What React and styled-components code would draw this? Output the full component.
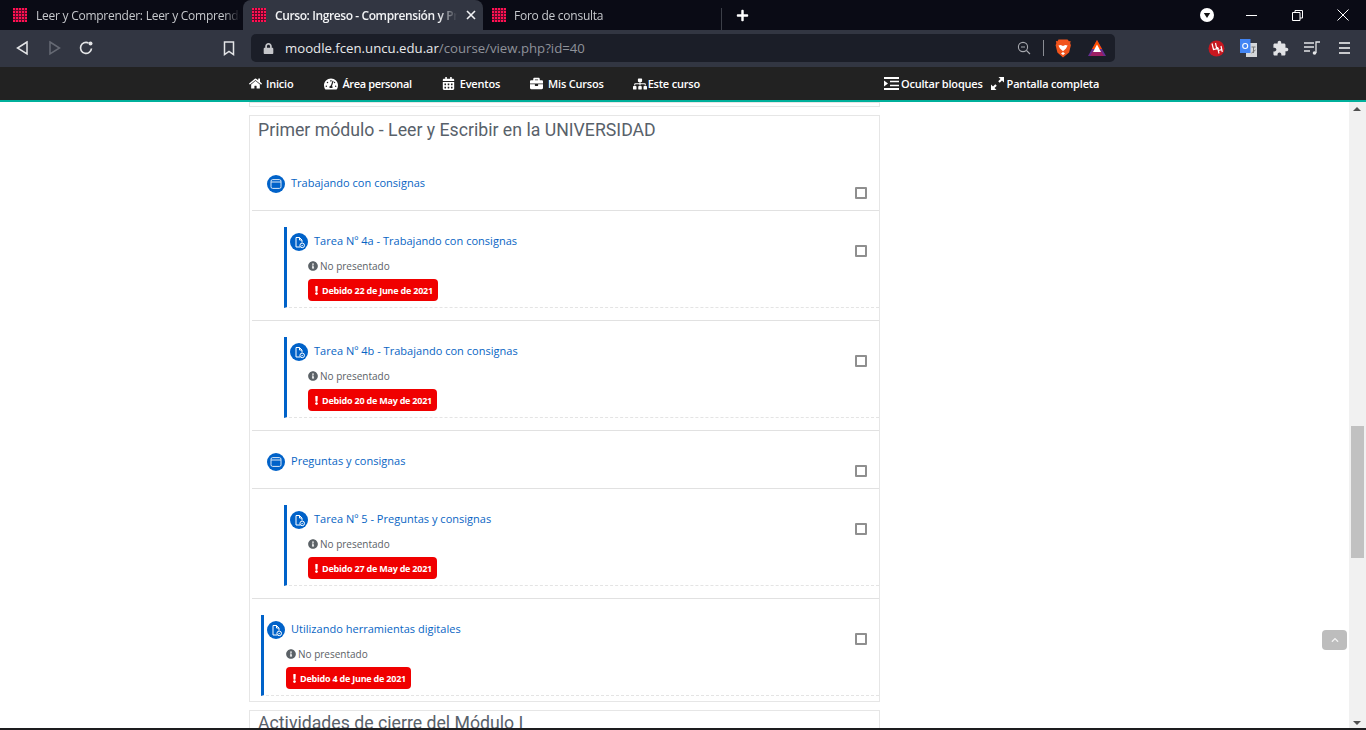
import React from 'react';
import styled, { createGlobalStyle } from 'styled-components';
import {
  FaHome, FaTachometerAlt, FaCalendarAlt, FaBriefcase, FaSitemap,
  FaInfoCircle, FaExclamation, FaChevronUp, FaPlus, FaLock,
} from 'react-icons/fa';

const GlobalStyle = createGlobalStyle`
  html, body { margin: 0; padding: 0; height: 100%; overflow: hidden; background: #fff; }
  * { box-sizing: border-box; }
  body { font-family: "Open Sans", "Liberation Sans", sans-serif; }
`;

const Screen = styled.div`
  width: 1366px;
  height: 730px;
  display: flex;
  flex-direction: column;
  overflow: hidden;
  position: relative;
`;

/* browser chrome */
const TabStrip = styled.div`
  height: 30px;
  flex: none;
  background: #0a0b15;
  display: flex;
  align-items: stretch;
`;

const Tab = styled.div`
  width: ${({ $w }) => $w}px;
  flex: none;
  display: flex;
  align-items: center;
  gap: ${({ $gap }) => $gap}px;
  padding-left: ${({ $pad }) => $pad}px;
  background: ${({ $active }) => ($active ? '#323642' : 'transparent')};
  border-radius: ${({ $active }) => ($active ? '8px 8px 0 0' : '0')};
  color: ${({ $active }) => ($active ? '#f1f2f4' : '#c6c8cc')};
  font-size: 12px;
  font-weight: ${({ $active }) => ($active ? 600 : 400)};
  letter-spacing: ${({ $active }) => ($active ? -0.4 : -0.25)}px;
  white-space: nowrap;
  overflow: hidden;
`;

const TabTitle = styled.span`
  width: ${({ $w }) => $w}px;
  overflow: hidden;
  white-space: nowrap;
  -webkit-mask-image: linear-gradient(to right, #000 ${({ $fade }) => $fade}%, transparent 100%);
  mask-image: linear-gradient(to right, #000 ${({ $fade }) => $fade}%, transparent 100%);
`;

const TabClose = styled.span`
  display: flex;
`;

const TabDivider = styled.div`
  width: 1px;
  height: 22px;
  margin-top: 8px;
  background: #3c3f48;
  flex: none;
`;

const NewTab = styled.div`
  width: 40px;
  flex: none;
  display: flex;
  align-items: center;
  justify-content: center;
  color: #fff;
  font-size: 13px;
`;

const StripEnd = styled.div`
  margin-left: auto;
  display: flex;
  align-items: center;
`;

const WindowButton = styled.div`
  width: 46px;
  height: 30px;
  padding-left: ${({ $shift }) => $shift || 0}px;
  display: flex;
  align-items: center;
  justify-content: center;
`;

const Toolbar = styled.div`
  height: 37px;
  flex: none;
  background: #323642;
  display: flex;
  align-items: center;
  padding: 0 0 1px 14px;
`;

const ToolSlot = styled.div`
  width: ${({ $w }) => $w}px;
  flex: none;
  display: flex;
  align-items: center;
  justify-content: ${({ $left }) => ($left ? 'flex-start' : 'center')};
`;

const Omnibox = styled.div`
  width: 864px;
  height: 28px;
  flex: none;
  background: #1b1e28;
  border-radius: 5px;
  display: flex;
  align-items: center;
  padding-left: 12px;
  font-size: 13.2px;
`;

const Host = styled.span`
  color: #e8e9eb;
  margin-left: 11px;
`;

const UrlPath = styled.span`
  color: #8f929a;
`;

const OmniEnd = styled.div`
  margin-left: auto;
  display: flex;
  align-items: center;
  padding-right: 9px;
`;

const OmniSep = styled.div`
  width: 1px;
  height: 16px;
  background: #8a8d94;
  margin: 0 11px 0 12px;
`;

const Extensions = styled.div`
  display: flex;
  align-items: center;
  margin-left: 85px;
`;

/* moodle page */
const NavBar = styled.nav`
  height: 35px;
  flex: none;
  background: #222;
  border-bottom: 2px solid #00b09b;
  display: flex;
  align-items: center;
  padding-left: 249px;
`;

const NavItem = styled.a`
  display: flex;
  align-items: center;
  gap: ${({ $gap }) => ($gap === undefined ? 4 : $gap)}px;
  margin-right: ${({ $mr }) => $mr}px;
  color: #fff;
  font-size: 11px;
  font-weight: 600;
  letter-spacing: ${({ $ls }) => ($ls === undefined ? -0.2 : $ls)}px;
  white-space: nowrap;
  svg { font-size: ${({ $icon }) => $icon || 13}px; flex: none; }
`;

const Viewport = styled.div`
  flex: 1;
  min-height: 0;
  display: flex;
  overflow: hidden;
`;

const Main = styled.main`
  flex: 1;
  min-width: 0;
  padding-left: 249px;
  position: relative;
  overflow: hidden;
`;

const Section = styled.section`
  width: 631px;
  border: 1px solid #e6e6e6;
  margin-bottom: 8px;
  height: ${({ $h }) => ($h ? `${$h}px` : 'auto')};
`;

const SectionName = styled.h3`
  margin: 0;
  height: 37px;
  padding: 4px 0 0 8px;
  font-family: Roboto, "Liberation Sans", sans-serif;
  font-size: 17.7px;
  line-height: 21px;
  font-weight: 400;
  color: #58616a;
`;

const Row = styled.div`
  display: flex;
  justify-content: space-between;
  align-items: flex-start;
  margin-left: 2px;
  padding-right: 12px;
  padding-top: ${({ $plain }) => ($plain ? 0 : 16)}px;
  height: ${({ $h }) => $h}px;
  border-bottom: ${({ $last }) => ($last ? 'none' : '1px solid #e1e1e1')};
`;

const Activity = styled.div`
  flex: 1;
  min-width: 0;
  margin-left: ${({ $indent }) => $indent}px;
  margin-right: ${({ $plain }) => ($plain ? 0 : -24)}px;
`;

const LabelLine = styled.div`
  display: flex;
  align-items: center;
  gap: 6px;
  height: 18px;
  margin-top: 22px;
`;

const Assignment = styled.div`
  height: 81px;
  border-left: 3px solid #0062c9;
  border-bottom: 1px dashed #e4e4e4;
  padding: 6px 0 0 3px;
`;

const TitleLine = styled.div`
  display: flex;
  align-items: center;
  gap: 6px;
  height: 18px;
`;

const IconDisc = styled.span`
  width: 18px;
  height: 18px;
  border-radius: 50%;
  background: #0062c9;
  flex: none;
  display: flex;
  align-items: center;
  justify-content: center;
`;

const ActivityLink = styled.a`
  color: #0865c4;
  font-size: 11px;
  letter-spacing: 0.02px;
  line-height: 16px;
  position: relative;
  top: -1px;
`;

const Status = styled.div`
  display: flex;
  align-items: center;
  gap: 2px;
  height: 14px;
  margin: 8px 0 0 ${({ $left }) => $left}px;
  color: #5b6166;
  font-size: 10px;
  font-weight: 500;
  svg { font-size: 10px; }
`;

const DueBadge = styled.div`
  display: inline-flex;
  align-items: center;
  gap: 1px;
  height: 22px;
  margin: 6px 0 0 ${({ $left }) => $left}px;
  padding: 0 5px 0 4px;
  background: #f00000;
  border-radius: 4px;
  color: #fff;
  font-size: 9px;
  font-weight: 700;
  letter-spacing: -0.22px;
  white-space: nowrap;
  svg { font-size: 9px; }
`;

const Check = styled.span`
  width: 12px;
  height: 12px;
  flex: none;
  border: 2px solid #8f8f8f;
  border-radius: 1px;
  margin-top: ${({ $top }) => $top}px;
`;

const CutOffName = styled(SectionName)`
  padding-top: 2px;
`;

const TopButton = styled.a`
  position: absolute;
  right: 2px;
  bottom: 80px;
  width: 25px;
  height: 20px;
  background: #bdbdbd;
  border-radius: 4px;
  color: #f4f4f4;
  display: flex;
  align-items: center;
  justify-content: center;
  font-size: 8px;
`;

const ScrollBar = styled.div`
  width: 17px;
  flex: none;
  background: #f1f1f1;
  position: relative;
`;

const ScrollThumb = styled.div`
  position: absolute;
  top: ${({ $top }) => $top}px;
  left: 2px;
  width: 13px;
  height: 132px;
  background: #c1c1c1;
`;

const ScrollArrow = styled.div`
  position: absolute;
  left: 4px;
  ${({ $up }) => ($up ? 'top: 5px;' : 'bottom: 5px;')}
  width: 0;
  height: 0;
  border-left: 4px solid transparent;
  border-right: 4px solid transparent;
  ${({ $up }) => ($up ? 'border-bottom: 4px solid #505050;' : 'border-top: 4px solid #505050;')}
`;

const Taskbar = styled.div`
  position: absolute;
  left: 0;
  right: 0;
  bottom: 0;
  height: 2px;
  background: #1d1d1f;
`;

/* small drawings */
const Favicon = () => (
  <svg width="14" height="14" viewBox="0 0 14 14">
    <rect width="14" height="14" fill="#5e0a2b" />
    {[0, 3, 6, 9, 12].map((y) =>
      [0, 3, 6, 9, 12].map((x) => (
        <rect key={`${x}-${y}`} x={x} y={y} width="2" height="2" fill="#ff1152" />
      ))
    )}
  </svg>
);

const WindowGlyph = () => (
  <svg width="12" height="12" viewBox="0 0 12 12" fill="none" stroke="#dbe8f7" strokeWidth="1">
    <rect x="1" y="1.600" width="10" height="8.800" rx="1.600" />
    <path d="M1 4h10" />
  </svg>
);

const TaskGlyph = () => (
  <svg width="13" height="13" viewBox="0 0 13 13" fill="none" stroke="#fff" strokeWidth="1">
    <path d="M7 11H3V1.500h3.500L9 4v2.500M6.500 1.500V4H9" />
    <circle cx="9.200" cy="9.400" r="2.300" />
    <path d="M8.300 9.500l.7.7 1.200-1.400" strokeWidth=".8" />
  </svg>
);

const HideBlocksGlyph = () => (
  <svg width="15" height="13" viewBox="0 0 15 13" fill="#fff">
    <path d="M0 0h15v2H0zM0 11h15v2H0zM6 3.700h9v1.600H6zM6 7.700h9v1.600H6zM0 3.500l4 3-4 3z" />
  </svg>
);

const ExpandGlyph = () => (
  <svg width="13" height="13" viewBox="0 0 13 13" fill="#fff">
    <path d="M7.500 0H13v5.500l-2-2-2.300 2.300-1.500-1.500L9.500 2zM5.500 13H0V7.500l2 2 2.300-2.300 1.500 1.500L3.500 11z" />
  </svg>
);

const Stroke = ({ w = 16, h = 16, children, color = '#e4e5e7', sw = 1.500 }) => (
  <svg width={w} height={h} viewBox={`0 0 ${w} ${h}`} fill="none" stroke={color} strokeWidth={sw}>
    {children}
  </svg>
);

const Brave = () => (
  <svg width="16" height="19" viewBox="0 0 16 19">
    <path d="M3.500 0.500h9l1.500 1.700 1.600-.2-.4 2.200.7 2-1.800 7.300L8 18.500l-5.600-5L.6 6.200l.7-2-.4-2.200 1.600.2z" fill="#f1541c" />
    <path d="M8 12.200 5 9.500l-1.600-3 2.400-.6L8 7l2.200-1.100 2.400.6-1.600 3zM8 13l2 1.600L8 16l-2-1.400z" fill="#fff" />
  </svg>
);

const BatLogo = () => (
  <svg width="18" height="16" viewBox="0 0 18 16">
    <path d="M9 0 18 16H0z" fill="#662d91" />
    <path d="M9 0l5 9H4z" fill="#ff5000" />
    <path d="M2 16l3-5h8l3 5z" fill="#9e1f63" />
    <path d="M9 4.500 13 12H5z" fill="#fff" />
  </svg>
);

const ExtensionPiece = () => (
  <svg width="17" height="17" viewBox="0 0 24 24" fill="#e1e2e5">
    <path d="M20.500 11H19V7c0-1.100-.9-2-2-2h-4V3.500C13 2.120 11.880 1 10.500 1S8 2.120 8 3.500V5H4c-1.100 0-1.990.9-1.990 2v3.800H3.500c1.490 0 2.700 1.210 2.700 2.700s-1.210 2.700-2.700 2.700H2V20c0 1.100.9 2 2 2h3.800v-1.500c0-1.490 1.210-2.700 2.700-2.700 1.490 0 2.700 1.210 2.700 2.700V22H17c1.100 0 2-.9 2-2v-4h1.500c1.380 0 2.500-1.120 2.500-2.500S21.880 11 20.500 11z" />
  </svg>
);

const Label = ({ indent, title, h }) => (
  <Row $plain $h={h}>
    <Activity $plain $indent={indent}>
      <LabelLine>
        <IconDisc><WindowGlyph /></IconDisc>
        <ActivityLink>{title}</ActivityLink>
      </LabelLine>
    </Activity>
    <Check $top={34} />
  </Row>
);

const Task = ({ indent, title, due, h, last, metaLeft = 18 }) => (
  <Row $h={h} $last={last}>
    <Activity $indent={indent}>
      <Assignment>
        <TitleLine>
          <IconDisc><TaskGlyph /></IconDisc>
          <ActivityLink>{title}</ActivityLink>
        </TitleLine>
        <Status $left={metaLeft}><FaInfoCircle />No presentado</Status>
        <DueBadge $left={metaLeft}><FaExclamation />{due}</DueBadge>
      </Assignment>
    </Activity>
    <Check $top={18} />
  </Row>
);

export default function App() {
  return (
    <Screen>
      <GlobalStyle />
      <TabStrip>
        <Tab $w={243} $pad={13} $gap={9}>
          <Favicon />
          <TabTitle $w={204} $fade={92}>Leer y Comprender: Leer y Comprender</TabTitle>
        </Tab>
        <Tab $active $w={240} $pad={9} $gap={9}>
          <Favicon />
          <TabTitle $w={182} $fade={90}>Curso: Ingreso - Comprensión y Producción</TabTitle>
          <TabClose>
            <svg width="10" height="10" viewBox="0 0 10 10" stroke="#f1f2f4" strokeWidth="1.600"><path d="M1 1l8 8M9 1l-8 8" /></svg>
          </TabClose>
        </Tab>
        <Tab $w={238} $pad={9} $gap={8}>
          <Favicon />
          <TabTitle $w={180} $fade={100}>Foro de consulta</TabTitle>
        </Tab>
        <TabDivider />
        <NewTab><FaPlus /></NewTab>
        <StripEnd>
          <WindowButton $shift={4}>
            <svg width="14" height="14" viewBox="0 0 14 14">
              <circle cx="7" cy="7" r="7" fill="#fff" />
              <path d="M3.800 5h6.400L7 10z" fill="#111" />
            </svg>
          </WindowButton>
          <WindowButton>
            <svg width="11" height="11" viewBox="0 0 11 11" stroke="#fff"><path d="M0 5.500h11" /></svg>
          </WindowButton>
          <WindowButton>
            <svg width="11" height="11" viewBox="0 0 11 11" fill="none" stroke="#fff"><path d="M.5 2.500h7.500v8H.5zM3 2.500V.5h7.500V8H8" /></svg>
          </WindowButton>
          <WindowButton>
            <svg width="12" height="12" viewBox="0 0 12 12" stroke="#fff"><path d="M.5.5l11 11M11.500.5l-11 11" /></svg>
          </WindowButton>
        </StripEnd>
      </TabStrip>

      <Toolbar>
        <ToolSlot $w={32} $left>
          <Stroke><path d="M13 2 3.500 8l9.500 6z" /></Stroke>
        </ToolSlot>
        <ToolSlot $w={32} $left>
          <Stroke color="#666a74"><path d="M4 2l9.500 6L4 14z" /></Stroke>
        </ToolSlot>
        <ToolSlot $w={32} $left>
          <Stroke sw={1.700}>
            <path d="M13.500 8.500A5.500 5.500 0 1 1 10.500 3" />
            <circle cx="12.500" cy="3.500" r="2" fill="#e4e5e7" stroke="none" />
          </Stroke>
        </ToolSlot>
        <ToolSlot $w={113} />
        <ToolSlot $w={20} $left>
          <Stroke w={12} h={15}><path d="M1.500 1h9v12.500L6 10.500l-4.500 3z" /></Stroke>
        </ToolSlot>
        <ToolSlot $w={8} />
        <Omnibox>
          <FaLock size={11} color="#c5c6ca" />
          <Host>moodle.fcen.uncu.edu.ar<UrlPath>/course/view.php?id=40</UrlPath></Host>
          <OmniEnd>
            <Stroke w={14} h={14} color="#a6a8ae" sw={1.100}>
              <circle cx="6" cy="6" r="4.600" />
              <path d="M9.500 9.500 13 13M4 6h4" />
            </Stroke>
            <OmniSep />
            <Brave />
            <ToolSlot $w={17} />
            <BatLogo />
          </OmniEnd>
        </Omnibox>
        <Extensions>
          <ToolSlot $w={32}>
            <svg width="17" height="17" viewBox="0 0 17 17">
              <circle cx="8.500" cy="8.500" r="8" fill="#c8171f" />
              <path d="M4 3.500l1.500 6 2.500-.6M7.500 3l1.300 6 2-.5M9.500 7l1.500 6.500M13 6l1.300 6M10.500 10.500l3-.8" stroke="#fff" strokeWidth="1.200" fill="none" />
            </svg>
          </ToolSlot>
          <ToolSlot $w={32}>
            <svg width="17" height="18" viewBox="0 0 17 18">
              <path d="M6 4h11v14H6z" fill="#d5d7da" />
              <path d="M0 0h10.500v14H0z" fill="#4285f4" />
              <circle cx="5.200" cy="7" r="2.500" fill="none" stroke="#fff" strokeWidth="1.100" />
              <path d="M11.500 8h4M13.500 8v6M11.500 14l4-3" stroke="#777" fill="none" />
            </svg>
          </ToolSlot>
          <ToolSlot $w={32}><ExtensionPiece /></ToolSlot>
          <ToolSlot $w={32}>
            <svg width="17" height="15" viewBox="0 0 17 15" stroke="#e4e5e7" fill="none" strokeWidth="1.300">
              <path d="M0 2h10M0 6h10M0 10h6M12 12V1h4" />
              <circle cx="10.500" cy="12" r="1.800" fill="#e4e5e7" stroke="none" />
            </svg>
          </ToolSlot>
          <ToolSlot $w={32}>
            <svg width="11" height="12" viewBox="0 0 11 12" stroke="#c9cacd" strokeWidth="2"><path d="M0 1h11M0 6h11M0 11h11" /></svg>
          </ToolSlot>
        </Extensions>
      </Toolbar>

      <NavBar>
        <NavItem $mr={31}><FaHome />Inicio</NavItem>
        <NavItem $mr={30} $icon={14} $ls={-0.37}><FaTachometerAlt />Área personal</NavItem>
        <NavItem $mr={30} $gap={5}><FaCalendarAlt />Eventos</NavItem>
        <NavItem $mr={29} $gap={5}><FaBriefcase />Mis Cursos</NavItem>
        <NavItem $mr={184} $gap={1} $icon={14}><FaSitemap />Este curso</NavItem>
        <NavItem $mr={8} $gap={2}><HideBlocksGlyph />Ocultar bloques</NavItem>
        <NavItem $mr={0} $gap={3}><ExpandGlyph />Pantalla completa</NavItem>
      </NavBar>

      <Viewport>
        <Main>
          <Section $h={5} />
          <Section>
            <SectionName>Primer módulo - Leer y Escribir en la UNIVERSIDAD</SectionName>
            <Label indent={15} title="Trabajando con consignas" h={58} />
            <Task indent={32} title="Tarea Nº 4a - Trabajando con consignas" due="Debido 22 de June de 2021" h={110} />
            <Task indent={32} title="Tarea Nº 4b - Trabajando con consignas" due="Debido 20 de May de 2021" h={110} />
            <Label indent={15} title="Preguntas y consignas" h={58} />
            <Task indent={32} title="Tarea Nº 5 - Preguntas y consignas" due="Debido 27 de May de 2021" h={110} />
            <Task indent={9} metaLeft={19} title="Utilizando herramientas digitales" due="Debido 4 de June de 2021" h={102} last />
          </Section>
          <Section>
            <CutOffName>Actividades de cierre del Módulo I</CutOffName>
          </Section>
          <TopButton><FaChevronUp /></TopButton>
        </Main>
        <ScrollBar>
          <ScrollArrow $up />
          <ScrollThumb $top={324} />
          <ScrollArrow />
        </ScrollBar>
      </Viewport>
      <Taskbar />
    </Screen>
  );
}
